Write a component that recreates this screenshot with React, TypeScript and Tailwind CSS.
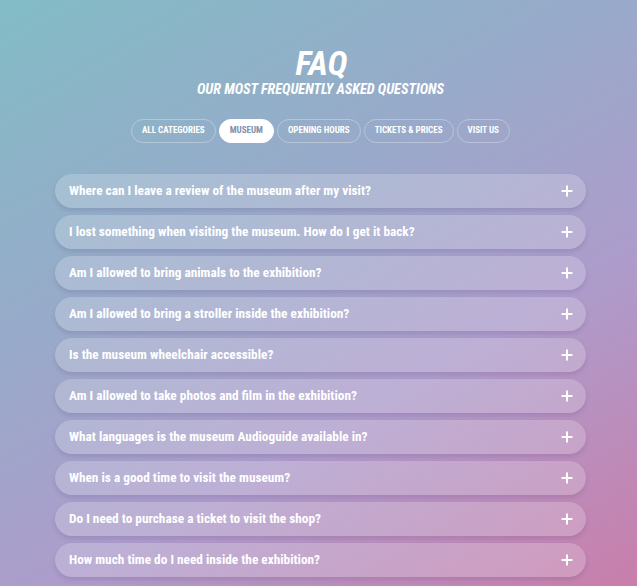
import { Plus } from "lucide-react";

const categories = [
  "All categories",
  "Museum",
  "Opening hours",
  "Tickets & prices",
  "Visit us",
];

const questions = [
  "Where can I leave a review of the museum after my visit?",
  "I lost something when visiting the museum. How do I get it back?",
  "Am I allowed to bring animals to the exhibition?",
  "Am I allowed to bring a stroller inside the exhibition?",
  "Is the museum wheelchair accessible?",
  "Am I allowed to take photos and film in the exhibition?",
  "What languages is the museum Audioguide available in?",
  "When is a good time to visit the museum?",
  "Do I need to purchase a ticket to visit the shop?",
  "How much time do I need inside the exhibition?",
];

const font = {
  fontFamily: '"Roboto Condensed", "Liberation Sans", sans-serif',
};

export default function App() {
  return (
    <div
      className="min-h-[586px] w-full bg-[linear-gradient(150deg,#82bcc6_0%,#97abc9_35%,#ad9ccb_65%,#c97eab_100%)] text-white"
      style={font}
    >
      <header className="flex flex-col items-center pt-[45px]">
        <h1 className="translate-x-[3px] text-[34px] font-bold italic leading-[36px]">
          FAQ
        </h1>
        <p className="mt-0 translate-x-[2px] text-[14.3px] font-bold italic uppercase leading-4">
          Our most frequently asked questions
        </p>
        <nav className="mt-[22px] flex translate-x-[2px] gap-[3px]">
          {categories.map((c) => {
            const active = c === "Museum";
            return (
              <button
                key={c}
                className={
                  active
                    ? "h-6 rounded-full border border-white bg-white px-[10px] text-[9px] font-bold uppercase text-[#8290ad]"
                    : "h-6 rounded-full border border-white/30 px-[10px] text-[9px] font-bold uppercase text-white"
                }
              >
                {c}
              </button>
            );
          })}
        </nav>
      </header>
      <main className="mx-auto mt-[31px] flex w-[531px] translate-x-[2px] flex-col gap-[7px] pb-2">
        {questions.map((q) => (
          <div
            key={q}
            className="flex h-[34px] items-center justify-between rounded-full bg-white/20 pl-[14px] pr-[11px] shadow-[0_3px_4px_rgba(90,70,130,0.18)]"
          >
            <span className="text-[13.3px] font-bold">{q}</span>
            <Plus size={16} strokeWidth={3} />
          </div>
        ))}
      </main>
    </div>
  );
}
